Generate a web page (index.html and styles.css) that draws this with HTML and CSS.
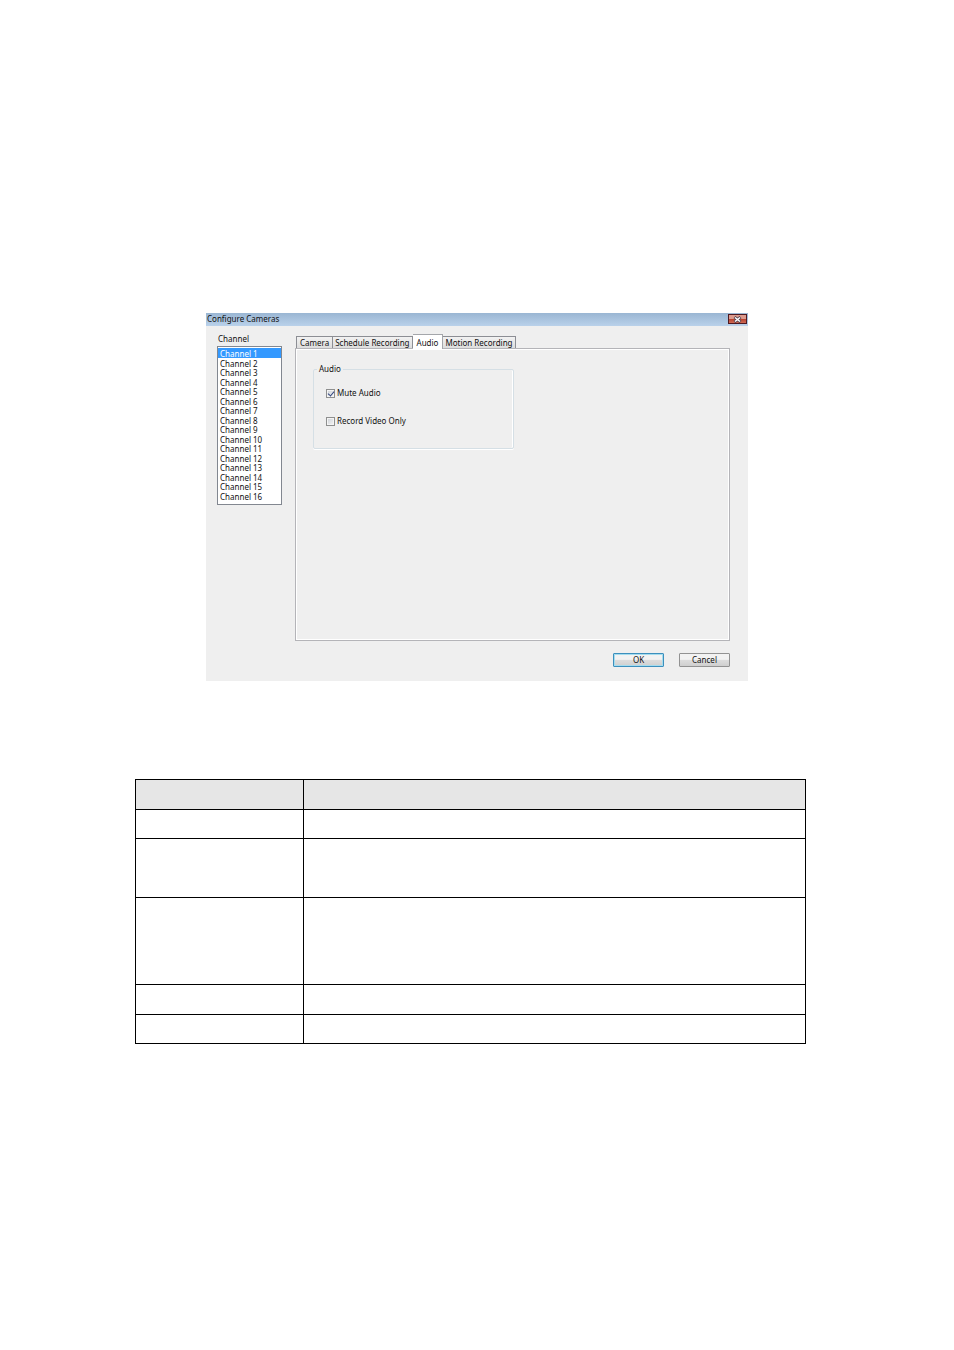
FILE: index.html
```
<!DOCTYPE html>
<html lang="en">
<head>
    <meta charset="utf-8">
    <title>Configure Cameras</title>
    <link rel="stylesheet" href="styles.css">
</head>
<body>
    <form class="dialog" onsubmit="event.preventDefault();">
        <div class="titlebar">
            <span>Configure Cameras</span>
            <button type="button" class="close" aria-label="Close">
                <svg width="9" height="7" viewBox="0 0 9 7">
                    <path d="M1.5 1 L7.5 6 M7.5 1 L1.5 6" stroke="#5b4650" stroke-width="3"/>
                    <path d="M2 1.5 L7 5.5 M7 1.5 L2 5.5" stroke="#ffffff" stroke-width="1.5"/>
                </svg>
            </button>
        </div>

        <div class="content">
            <div class="channels">
                <label for="channel">Channel</label>
                <select id="channel" class="channel-list" size="16">
                    <option selected>Channel 1</option>
                    <option>Channel 2</option>
                    <option>Channel 3</option>
                    <option>Channel 4</option>
                    <option>Channel 5</option>
                    <option>Channel 6</option>
                    <option>Channel 7</option>
                    <option>Channel 8</option>
                    <option>Channel 9</option>
                    <option>Channel 10</option>
                    <option>Channel 11</option>
                    <option>Channel 12</option>
                    <option>Channel 13</option>
                    <option>Channel 14</option>
                    <option>Channel 15</option>
                    <option>Channel 16</option>
                </select>
            </div>

            <div class="settings">
                <div class="tabs">
                    <button type="button" class="tab">Camera</button>
                    <button type="button" class="tab">Schedule Recording</button>
                    <button type="button" class="tab active">Audio</button>
                    <button type="button" class="tab">Motion Recording</button>
                </div>
                <div class="panel">
                    <fieldset class="group">
                        <legend>Audio</legend>
                        <div class="option">
                            <input type="checkbox" id="mute" checked>
                            <label for="mute">Mute Audio</label>
                        </div>
                        <div class="option">
                            <input type="checkbox" id="videoOnly">
                            <label for="videoOnly">Record Video Only</label>
                        </div>
                    </fieldset>
                </div>
            </div>
        </div>

        <div class="actions">
            <button type="submit" class="button default">OK</button>
            <button type="button" class="button">Cancel</button>
        </div>
    </form>

    <table class="description">
        <thead>
            <tr class="row-tall"><th class="name"></th><th></th></tr>
        </thead>
        <tbody>
            <tr class="row"><td></td><td></td></tr>
            <tr class="row-double"><td></td><td></td></tr>
            <tr class="row-triple"><td></td><td></td></tr>
            <tr class="row-tall"><td></td><td></td></tr>
            <tr class="row"><td></td><td></td></tr>
        </tbody>
    </table>
</body>
</html>
```

FILE: styles.css
```
* {
    box-sizing: border-box;
}

body {
    margin: 0;
    padding: 313px 148px 0 135px;
    background-color: #ffffff;
    color: #111111;
    font-family: "Noto Sans", sans-serif;
    font-size: 8px;
    line-height: 10px;
}

button, select, input {
    margin: 0;
    color: inherit;
    font: inherit;
}

.dialog {
    margin: 0 58px 0 71px;
    background-color: #efefef;
}

.titlebar {
    display: flex;
    justify-content: space-between;
    align-items: flex-start;
    height: 13px;
    padding: 1px 1px 0;
    background: linear-gradient(#9ab6d3, #b9d1ea);
}

.close {
    display: flex;
    justify-content: center;
    align-items: center;
    width: 19px;
    height: 10px;
    padding: 0;
    border: 1px solid #4d1a22;
    background: linear-gradient(#dd9a8c 45%, #b8412e 50%, #cf6a55);
}

.content {
    display: flex;
    gap: 13px;
    padding: 8px 18px 0 11px;
}

.channels {
    display: flex;
    flex-direction: column;
    width: 65px;
}

.channels label {
    padding: 0 1px 2px;
}

.channel-list {
    height: 159px;
    padding: 1px 0;
    border: 1px solid #828790;
    border-radius: 0;
    background-color: #ffffff;
    overflow: hidden;
    outline: none;
}

.channel-list option {
    height: 9px;
    min-height: 0;
    padding: 0 2px;
    line-height: 8px;
}

.channel-list option:nth-child(odd) {
    height: 10px;
}

.channel-list option:checked {
    background: linear-gradient(#3399ff, #3399ff);
    -webkit-text-fill-color: #ffffff;
}

.settings {
    display: flex;
    flex: 1;
    flex-direction: column;
}

.tabs {
    display: flex;
    align-items: flex-end;
    height: 14px;
    padding-left: 1px;
}

.tab {
    height: 12px;
    padding: 0 2px;
    border: 1px solid #8c8e94;
    border-left-width: 0;
    border-bottom: none;
    background: linear-gradient(#f2f2f2, #dddddd);
    line-height: 11px;
    white-space: nowrap;
}

.tab:first-child {
    padding: 0 3px;
    border-left-width: 1px;
}

.tab.active {
    height: 15px;
    margin-bottom: -1px;
    padding: 0 4px;
    border-color: #a4a6aa;
    background: #ffffff;
    z-index: 1;
}

.panel {
    height: 293px;
    padding: 15px 17px;
    border: 1px solid #b4b4b8;
    box-shadow: inset 0 0 0 1px #ffffff;
}

.group {
    width: 201px;
    max-width: 100%;
    height: 85px;
    margin: 0;
    padding: 14px 12px 0;
    border: 1px solid #d5dfe5;
    border-radius: 2px;
    box-shadow: 0 1px #ffffff, inset -1px 0 #ffffff;
}

.group legend {
    margin-left: -9px;
    padding: 0 2px;
}

.option {
    display: flex;
    align-items: center;
    gap: 2px;
    height: 10px;
    margin-bottom: 18px;
}

.option input {
    appearance: none;
    width: 9px;
    height: 9px;
    border: 1px solid #8e8f8f;
    background: linear-gradient(135deg, #cbcfd5, #f6f6f6);
    box-shadow: inset 0 0 0 1px #f4f4f4;
}

.option input:checked::before {
    content: "";
    display: block;
    width: 3px;
    height: 5px;
    margin-left: 2px;
    border: solid #33467f;
    border-width: 0 1px 1px 0;
    transform: rotate(40deg);
}

.actions {
    display: flex;
    justify-content: flex-end;
    gap: 15px;
    padding: 12px 18px 14px;
}

.button {
    width: 51px;
    height: 14px;
    padding: 0;
    border: 1px solid #929292;
    border-radius: 1px;
    background: linear-gradient(#f2f2f2 45%, #dddddd 50%, #cfcfcf);
    line-height: 12px;
}

.button.default {
    border-color: #3c8fbd;
    box-shadow: inset 0 0 0 1px #a5dcee;
}

.description {
    width: 100%;
    margin-top: 98px;
    border-collapse: collapse;
    table-layout: fixed;
}

.description th, .description td {
    padding: 0;
    border: 1px solid #000000;
}

.description th {
    background-color: #e6e6e6;
}

.name {
    width: 168px;
}

.row {
    height: 29px;
}

.row-tall {
    height: 30px;
}

.row-double {
    height: 59px;
}

.row-triple {
    height: 87px;
}
```
